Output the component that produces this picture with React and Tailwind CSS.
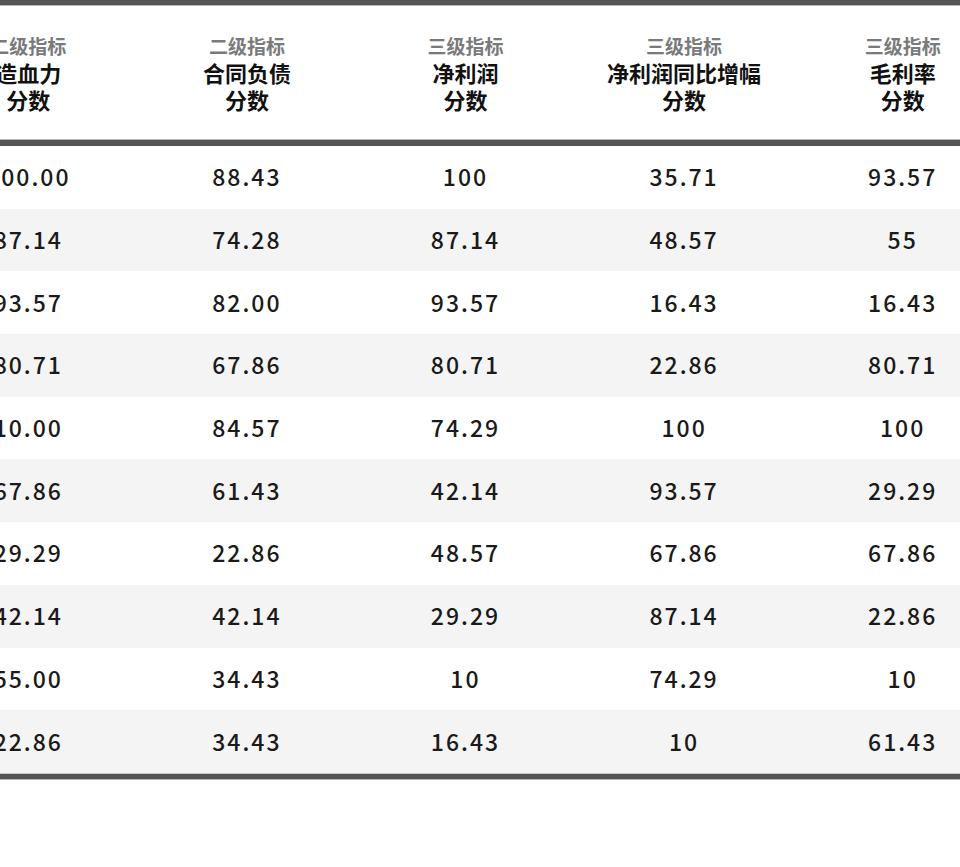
import React from "react";

const columns = [
  { level: "二级指标", name: "造血力" },
  { level: "二级指标", name: "合同负债" },
  { level: "三级指标", name: "净利润" },
  { level: "三级指标", name: "净利润同比增幅" },
  { level: "三级指标", name: "毛利率" },
];

const rows = [
  ["100.00", "88.43", "100", "35.71", "93.57"],
  ["87.14", "74.28", "87.14", "48.57", "55"],
  ["93.57", "82.00", "93.57", "16.43", "16.43"],
  ["80.71", "67.86", "80.71", "22.86", "80.71"],
  ["10.00", "84.57", "74.29", "100", "100"],
  ["67.86", "61.43", "42.14", "93.57", "29.29"],
  ["29.29", "22.86", "48.57", "67.86", "67.86"],
  ["42.14", "42.14", "29.29", "87.14", "22.86"],
  ["55.00", "34.43", "10", "74.29", "10"],
  ["22.86", "34.43", "16.43", "10", "61.43"],
];

export default function App() {
  return (
    <div
      className="w-[960px] h-[867px] bg-white overflow-hidden"
      style={{ fontFamily: '"Noto Sans CJK SC", "Noto Sans", sans-serif' }}
    >
      {/* table is scrolled sideways, first column partly hidden */}
      <div className="ml-[-81px] w-[1093px]">
        <div className="h-[5px] bg-[#555555]" />
        <div className="h-[1px] bg-[#b5b5b5]" />

        {/* HEADER */}
        <div className="flex h-[133px] items-center">
          {columns.map((col, i) => (
            <div key={i} className="w-[218.6px] shrink-0 flex flex-col items-center text-center whitespace-nowrap">
              <span className="text-[19px] leading-[27px] font-bold text-[#7a7a7a]">{col.level}</span>
              <span className="text-[22px] leading-[27px] font-bold text-[#111]">{col.name}</span>
              <span className="text-[22px] leading-[27px] font-bold text-[#111]">分数</span>
            </div>
          ))}
        </div>

        <div className="h-[1px] bg-[#b5b5b5]" />
        <div className="h-[6px] bg-[#555555]" />

        {/* BODY */}
        {rows.map((row, r) => (
          <div key={r} className={`flex h-[62.7px] items-center ${r % 2 === 1 ? "bg-[#f4f4f4]" : "bg-white"}`}>
            {row.map((v, c) => (
              <div key={c} className="w-[218.6px] shrink-0 text-center text-[23px] leading-[30px] pb-[2px] font-medium tracking-[2px] text-[#1a1a1a]">
                {v}
              </div>
            ))}
          </div>
        ))}

        <div className="h-[1px] bg-[#c8c8c8]" />
        <div className="h-[5px] bg-[#555555]" />
        <div className="h-[1px] bg-[#b5b5b5]" />
      </div>
    </div>
  );
}
